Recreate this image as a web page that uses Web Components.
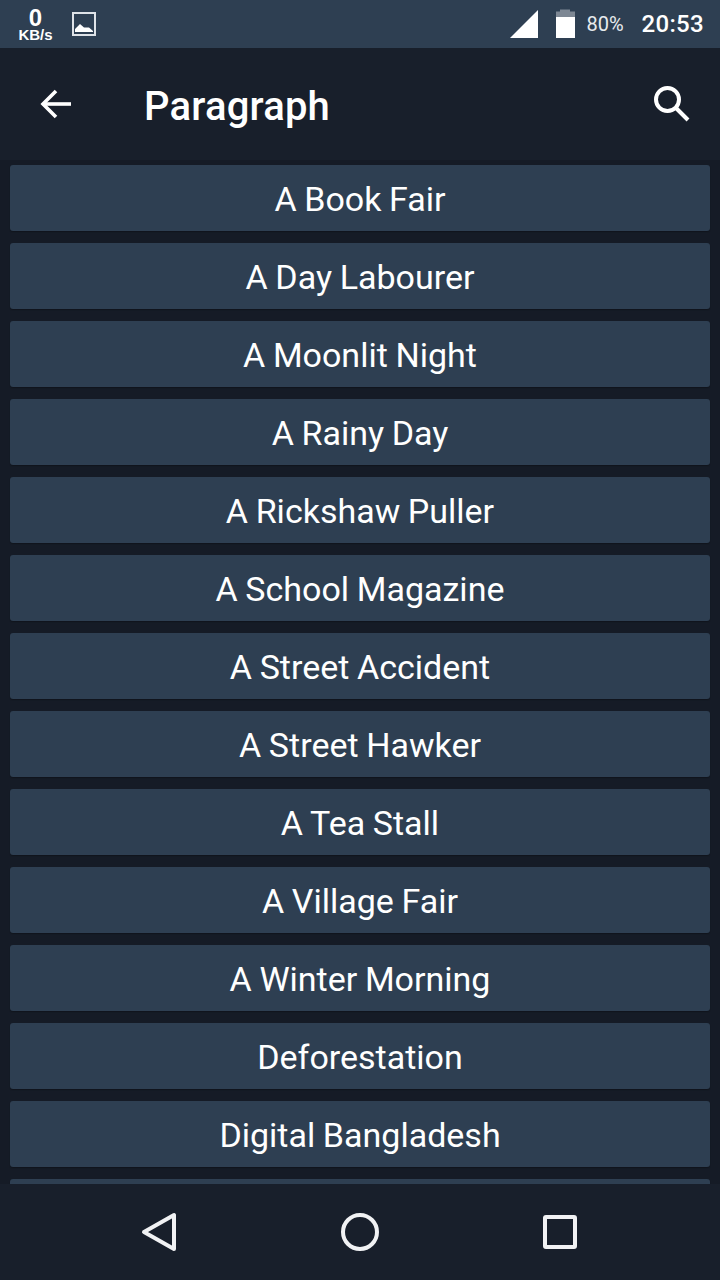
<!DOCTYPE html>
<html>
<head>
<meta charset="utf-8">
<title>Paragraph</title>
<style>
    html,body{margin:0;height:100%;background:#181f2b;}
    body{font-family:Roboto,sans-serif;}
    app-screen{height:1280px;}
</style>
</head>
<body>
<app-screen>
    <status-bar></status-bar>
    <app-toolbar title="Paragraph"></app-toolbar>
    <topic-list>
        <topic-row>A Book Fair</topic-row>
        <topic-row>A Day Labourer</topic-row>
        <topic-row>A Moonlit Night</topic-row>
        <topic-row>A Rainy Day</topic-row>
        <topic-row>A Rickshaw Puller</topic-row>
        <topic-row>A School Magazine</topic-row>
        <topic-row>A Street Accident</topic-row>
        <topic-row>A Street Hawker</topic-row>
        <topic-row>A Tea Stall</topic-row>
        <topic-row>A Village Fair</topic-row>
        <topic-row>A Winter Morning</topic-row>
        <topic-row>Deforestation</topic-row>
        <topic-row>Digital Bangladesh</topic-row>
        <topic-row></topic-row>
    </topic-list>
    <nav-bar></nav-bar>
</app-screen>
<script>
class AppScreen extends HTMLElement {
    constructor(){
        super();
        this.attachShadow({mode:'open'});
        this.shadowRoot.innerHTML=`
            <style>
                :host{display:flex;flex-direction:column;width:720px;height:1280px;overflow:hidden;background:#181f2b;}
            </style>
            <slot></slot>
        `;
    }
}

class StatusBar extends HTMLElement {
    constructor(){
        super();
        this.attachShadow({mode:'open'});
        this.shadowRoot.innerHTML=`
            <style>
                :host{display:flex;flex:none;align-items:center;height:48px;background:#2e3f52;color:#fff;padding:0 16px 0 18px;box-sizing:border-box;font-family:Roboto,sans-serif;}
                .speed{display:flex;flex-direction:column;align-items:center;width:35px;margin-top:1px;font-family:"Liberation Sans",sans-serif;font-weight:700;}
                .speed b{font-size:24px;line-height:20px;}
                .speed span{font-size:15px;line-height:13px;}
                .pic{margin-left:19px;display:block;}
                .right{margin-left:auto;display:flex;align-items:center;}
                .signal{display:block;}
                .battery{display:block;margin-left:17px;}
                .pct{font-size:20px;margin-left:11px;color:#e8ebee;}
                .time{font-size:24px;font-weight:500;margin-left:18px;letter-spacing:.3px;}
            </style>
            <div class="speed"><b>0</b><span>KB/s</span></div>
            <svg class="pic" width="24" height="24" viewBox="0 0 24 24">
                <rect x="1" y="1" width="22" height="22" fill="none" stroke="#dfe3e8" stroke-width="2"/>
                <path d="M3 20 V17 L8 12 L12 15.500 L15 15.500 L17 15.500 L21 19 V20 Z" fill="#fff"/>
            </svg>
            <div class="right">
                <svg class="signal" width="30" height="30" viewBox="0 0 30 30"><path d="M1 29 L29 1 L29 29 Z" fill="#fff"/></svg>
                <svg class="battery" width="19" height="30" viewBox="0 0 19 30">
                    <path d="M4 0.500 H14 V2.500 H19 V10 H0 V2.500 H4 Z" fill="#7d8793"/>
                    <rect x="0" y="8" width="19" height="21" fill="#fff"/>
                </svg>
                <span class="pct">80%</span>
                <span class="time">20:53</span>
            </div>
        `;
    }
}

class AppToolbar extends HTMLElement {
    constructor(){
        super();
        this.attachShadow({mode:'open'});
        this.shadowRoot.innerHTML=`
            <style>
                :host{display:flex;flex:none;align-items:center;height:112px;padding:0 30px 0 37px;box-sizing:border-box;background:#181f2b;color:#fff;font-family:Roboto,sans-serif;}
                h1{margin:6px 0 0 71px;font-size:40px;font-weight:500;line-height:1;letter-spacing:.2px;flex:1;}
                svg{display:block;}
            </style>
            <svg width="36" height="32" viewBox="0 0 36 32" fill="none" stroke="#fff" stroke-width="3.600">
                <path d="M34 16 H6"/>
                <path d="M19 3 L6 16 L19 29"/>
            </svg>
            <h1>${this.getAttribute('title')||''}</h1>
            <svg width="36" height="36" viewBox="0 0 36 36" fill="none" stroke="#fff" stroke-width="4">
                <circle cx="13.500" cy="13.500" r="11.500"/>
                <path d="M21.500 21.500 L34 34"/>
            </svg>
        `;
    }
}

class TopicList extends HTMLElement {
    constructor(){
        super();
        this.attachShadow({mode:'open'});
        this.shadowRoot.innerHTML=`
            <style>
                :host{display:flex;flex-direction:column;gap:12px;flex:1;min-height:0;overflow:hidden;padding:5px 10px 0;box-sizing:border-box;background:#151b26;}
            </style>
            <slot></slot>
        `;
    }
}

class TopicRow extends HTMLElement {
    constructor(){
        super();
        this.attachShadow({mode:'open'});
        this.shadowRoot.innerHTML=`
            <style>
                :host{display:flex;flex:none;align-items:center;justify-content:center;height:66px;padding-top:2px;box-sizing:border-box;border-radius:3px;background:#2e3f52;color:#fff;font-family:Roboto,sans-serif;font-size:34px;word-spacing:-.8px;box-shadow:0 1px 1px #10151d;}
            </style>
            <slot></slot>
        `;
    }
}

class NavBar extends HTMLElement {
    constructor(){
        super();
        this.attachShadow({mode:'open'});
        this.shadowRoot.innerHTML=`
            <style>
                :host{display:flex;flex:none;align-items:center;justify-content:space-around;height:96px;background:#181f2b;padding:0 60px;box-sizing:border-box;}
                svg{display:block;}
            </style>
            <svg width="40" height="40" viewBox="0 0 40 40" fill="none" stroke="#f1f2f4" stroke-width="4" stroke-linejoin="round"><path d="M4 20 L34 3 L34 37 Z"/></svg>
            <svg width="40" height="40" viewBox="0 0 40 40" fill="none" stroke="#f1f2f4" stroke-width="4"><circle cx="20" cy="20" r="17"/></svg>
            <svg width="40" height="40" viewBox="0 0 40 40" fill="none" stroke="#f1f2f4" stroke-width="4" stroke-linejoin="round"><rect x="5" y="5" width="30" height="30" rx="1"/></svg>
        `;
    }
}

customElements.define('app-screen',AppScreen);
customElements.define('status-bar',StatusBar);
customElements.define('app-toolbar',AppToolbar);
customElements.define('topic-list',TopicList);
customElements.define('topic-row',TopicRow);
customElements.define('nav-bar',NavBar);
</script>
</body>
</html>
